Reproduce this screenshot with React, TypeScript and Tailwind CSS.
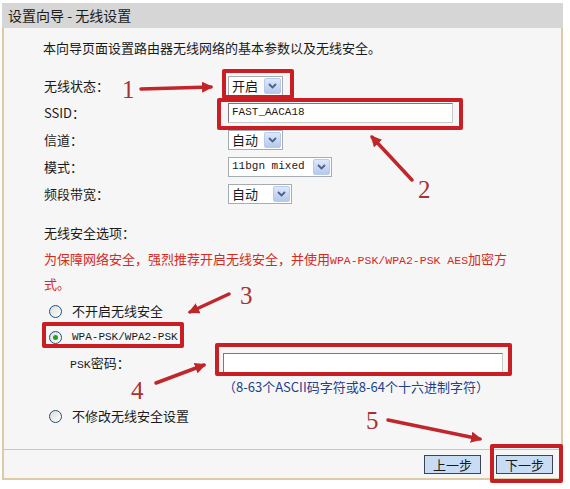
import React from "react";

const CJK = '"Noto Sans CJK SC", "Liberation Sans", sans-serif';
const MONO = '"Liberation Mono", "Noto Sans CJK SC", monospace';

function Chevron() {
  return (
    <svg width="9" height="6" viewBox="0 0 9 6">
      <path d="M1 1 L4.5 4.5 L8 1" fill="none" stroke="#4d6185" strokeWidth="1.8" />
    </svg>
  );
}

function Select({ label, width, mono }: { label: string; width: number; mono?: boolean }) {
  return (
    <div
      className="flex h-[20px] border border-[#a5acb2] bg-white"
      style={{ width }}
    >
      <div
        className="flex-1 pl-[3px] flex items-center text-[13px] text-[#1a1a1a] whitespace-nowrap"
        style={{ fontFamily: mono ? MONO : CJK, fontSize: mono ? 11 : 13 }}
      >
        {label}
      </div>
      <div className="w-[17px] m-[1px] flex items-center justify-center bg-gradient-to-b from-[#dde8fb] to-[#b5c9ee] border border-[#b9cbea] rounded-[2px]">
        <Chevron />
      </div>
    </div>
  );
}

function Radio({ checked }: { checked?: boolean }) {
  return (
    <div className="w-[13px] h-[13px] rounded-full border border-[#1c5180] bg-gradient-to-br from-[#dcdcd7] to-white flex items-center justify-center">
      {checked && <div className="w-[5px] h-[5px] rounded-full bg-[#21a121]" />}
    </div>
  );
}

function Row({ label, children }: { label: string; children: React.ReactNode }) {
  return (
    <div className="flex items-center h-[27px]">
      <div className="w-[224px] pl-[40px] text-[13px] text-[#1a1a1a]">{label}</div>
      {children}
    </div>
  );
}

export default function App() {
  return (
    <div className="relative w-[570px] h-[489px] bg-white overflow-hidden" style={{ fontFamily: CJK }}>
      <div className="ml-[2px] mt-[3px] w-[561px] h-[477px] flex flex-col">
        <div className="h-[25px] shrink-0 bg-[#d6d6d6] pl-[6px] flex items-center text-[14px] text-[#1a1a1a]">
          设置向导 - 无线设置
        </div>
        <div className="flex-1 flex flex-col border-l-2 border-r-2 border-b-2 border-[#dccba6] bg-[#f6f6f6]">
          <div className="pt-[11px] pl-[39px] leading-[18px] text-[13px] text-[#1a1a1a]">
            本向导页面设置路由器无线网络的基本参数以及无线安全。
          </div>
          <div className="mt-[15px] flex flex-col">
            <Row label="无线状态：">
              <Select label="开启" width={55} />
            </Row>
            <Row label="SSID：">
              <div
                className="w-[225px] h-[20px] border border-[#7a7a7a] border-r-[#c8c8c8] border-b-[#c8c8c8] bg-white pl-[3px] flex items-center text-[11px] text-[#1a1a1a]"
                style={{ fontFamily: MONO }}
              >
                FAST_AACA18
              </div>
            </Row>
            <Row label="信道：">
              <Select label="自动" width={55} />
            </Row>
            <Row label="模式：">
              <Select label="11bgn mixed" width={104} mono />
            </Row>
            <Row label="频段带宽：">
              <Select label="自动　" width={64} />
            </Row>
          </div>
          <div className="mt-[16px] pl-[40px] leading-[20px] text-[13px] text-[#1a1a1a]">无线安全选项：</div>
          <div className="mt-[4px] pl-[40px] leading-[23px] text-[13px] text-[#d42a20]">
            为保障网络安全，强烈推荐开启无线安全，并使用
            <span style={{ fontFamily: MONO, fontSize: 11.5 }}>WPA-PSK/WPA2-PSK AES</span>加密方
            <br />
            式。
          </div>
          <div className="mt-[3px] h-[26px] flex items-center pl-[45px] gap-[10px] text-[13px] leading-[16px] text-[#1a1a1a]">
            <Radio />
            <span>不开启无线安全</span>
          </div>
          <div className="h-[26px] flex items-center pl-[45px] gap-[10px] text-[#1a1a1a]">
            <Radio checked />
            <span className="text-[11px]" style={{ fontFamily: MONO }}>WPA-PSK/WPA2-PSK</span>
          </div>
          <div className="h-[26px] flex items-center">
            <div className="w-[219px] pl-[66px] text-[13px] text-[#1a1a1a]">
              <span className="text-[11.5px]" style={{ fontFamily: MONO }}>PSK</span>密码：
            </div>
            <div className="w-[280px] h-[20px] border border-[#7a7a7a] border-r-[#c8c8c8] border-b-[#c8c8c8] bg-white" />
          </div>
          <div className="h-[22px] flex items-center pl-[219px] text-[13px] leading-[16px] text-[#233e8b] whitespace-nowrap">
            （8-63个ASCII码字符或8-64个十六进制字符）
          </div>
          <div className="mt-[5px] h-[26px] flex items-center pl-[45px] gap-[10px] text-[13px] leading-[16px] text-[#1a1a1a]">
            <Radio />
            <span>不修改无线安全设置</span>
          </div>
          <div className="mt-auto h-[29px] border-t border-[#d4c7a8] flex items-center justify-end gap-[15px] pr-[8px]">
            <button className="w-[57px] h-[19px] border border-[#3a4656] bg-[#c8ddf3] text-[13px] text-[#1a1a1a] leading-none">上一步</button>
            <button className="w-[57px] h-[19px] border border-[#3a4656] bg-[#c8ddf3] text-[13px] text-[#1a1a1a] leading-none">下一步</button>
          </div>
        </div>
      </div>

      {/* annotation overlay: red boxes */}
      <div className="absolute left-[222px] top-[69px] w-[72px] h-[30px] border-[4px] border-[#c81e24] rounded-[2px]" />
      <div className="absolute left-[217px] top-[98px] w-[246px] h-[32px] border-[4px] border-[#c81e24] rounded-[2px]" />
      <div className="absolute left-[42px] top-[322px] w-[142px] h-[26px] border-[4px] border-[#c81e24] rounded-[2px]" />
      <div className="absolute left-[215px] top-[343px] w-[297px] h-[33px] border-[4px] border-[#c81e24] rounded-[2px]" />
      <div className="absolute left-[490px] top-[444px] w-[73px] h-[39px] border-[4px] border-[#c81e24] rounded-[2px]" />

      {/* arrows */}
      <svg className="absolute left-0 top-0 pointer-events-none" width="570" height="489">
        <defs>
          <marker id="ah" viewBox="0 0 10 10" refX="8" refY="5" markerWidth="3.2" markerHeight="3.2" orient="auto">
            <path d="M0 0 L10 5 L0 10 Z" fill="#c0262a" />
          </marker>
        </defs>
        <g stroke="#c0262a" strokeWidth="3.5" strokeLinecap="round" fill="none" markerEnd="url(#ah)">
          <line x1="141" y1="89" x2="211" y2="87" />
          <line x1="412" y1="180" x2="372" y2="137" />
          <line x1="229" y1="294" x2="190" y2="312" />
          <line x1="156" y1="383" x2="204" y2="365" />
          <line x1="388" y1="420" x2="480" y2="439" />
        </g>
      </svg>

      {/* numbers */}
      {[
        { n: "1", x: 122, y: 81 },
        { n: "2", x: 418, y: 181 },
        { n: "3", x: 240, y: 287 },
        { n: "4", x: 131, y: 382 },
        { n: "5", x: 366, y: 412 },
      ].map((d) => (
        <div
          key={d.n}
          className="absolute text-[25px] leading-[18px] text-[#a83232]"
          style={{ left: d.x, top: d.y, fontFamily: '"Liberation Serif", serif' }}
        >
          {d.n}
        </div>
      ))}
    </div>
  );
}
